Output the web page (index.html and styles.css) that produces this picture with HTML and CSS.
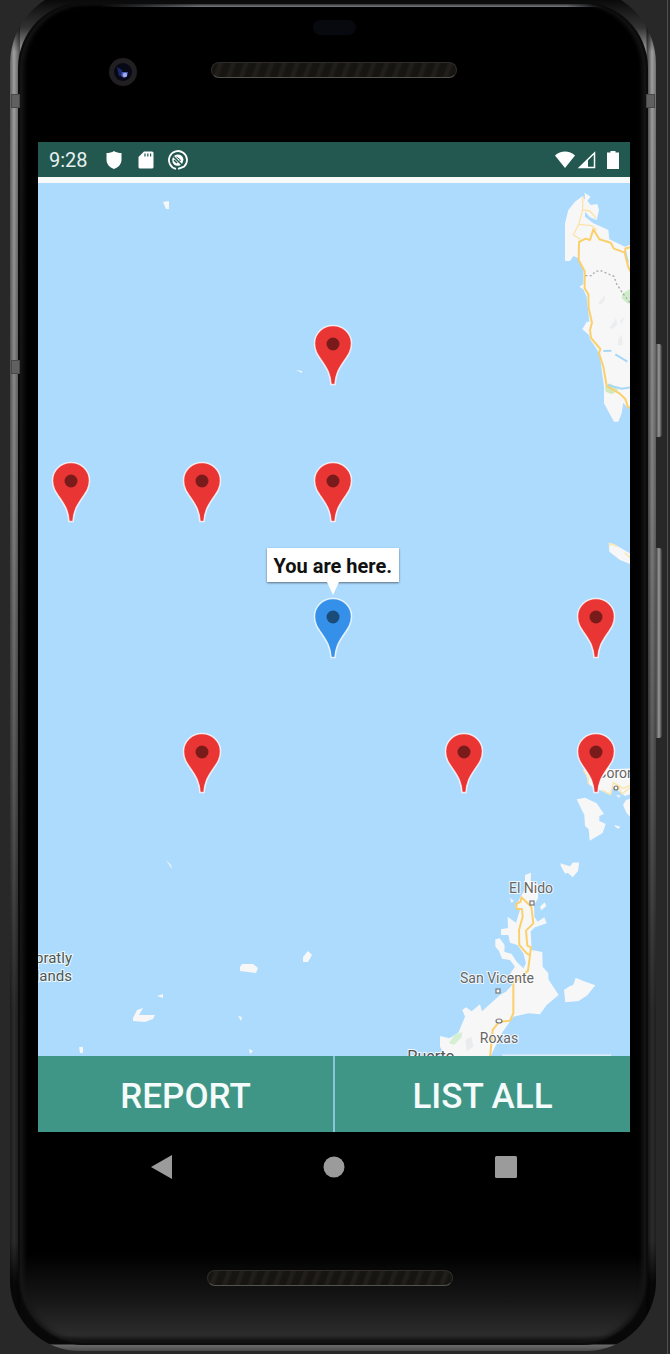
FILE: index.html
```html
<!DOCTYPE html>
<html lang="en">
<head>
<meta charset="utf-8">
<meta name="viewport" content="width=device-width, initial-scale=1">
<title>Report map</title>
<link rel="stylesheet" href="styles.css">
</head>
<body>
<svg class="defs" aria-hidden="true">
  <symbol id="pin" viewBox="0 0 40 62">
    <path d="M20 1.500C9.800 1.500 1.500 9.700 1.500 19.500C1.500 27 5 31.500 9.500 38C14.500 45.500 17.200 50 18 60.500H22C22.800 50 25.500 45.500 30.500 38C35 31.500 38.500 27 38.500 19.500C38.500 9.700 30.200 1.500 20 1.500Z" fill="currentColor" stroke="#fff" stroke-opacity=".8" stroke-width="1.500"/>
    <circle class="pin-dot" cx="20" cy="20" r="6.500"/>
  </symbol>
</svg>
<div class="phone">
  <span class="side-key power"></span>
  <span class="side-key volume"></span>
  <span class="band band-left"></span>
  <span class="band band-right"></span>
  <span class="band band-low"></span>
  <div class="face">
    <div class="bezel-top">
      <span class="sensor"></span>
      <div class="bezel-row">
        <svg class="camera" viewBox="0 0 28 28" aria-hidden="true">
          <circle cx="14" cy="14" r="14" fill="#211f21"/>
          <circle cx="14" cy="14" r="9" fill="#070916"/>
          <path d="M8 9L13 12L14 17L10 18Z" fill="#1c2968"/>
          <path d="M13 14L19 14L18 18L15 20L12 18Z" fill="#4a57b5"/>
          <circle cx="16" cy="17" r="2.200" fill="#a3abea"/>
        </svg>
        <span class="speaker"></span>
      </div>
    </div>
    <main class="screen">
      <header class="status">
        <span class="clock">9:28</span>
        <svg class="icon" viewBox="0 0 20 20" aria-hidden="true"><path d="M10 1C12 2.500 15 3 17.500 3V9.500C17.500 14 14.500 17.500 10 19C5.500 17.500 2.500 14 2.500 9.500V3C5 3 8 2.500 10 1Z" fill="#fff"/></svg>
        <svg class="icon" viewBox="0 0 20 20" aria-hidden="true"><path d="M8 1.500H16Q17.500 1.500 17.500 3V17Q17.500 18.500 16 18.500H4Q2.500 18.500 2.500 17V7Z" fill="#fff"/><path d="M9 3.500V6.500M11.800 3.500V6.500M14.600 3.500V6.500" stroke="#22584f" stroke-width="1.200"/></svg>
        <svg class="icon" viewBox="0 0 20 20" aria-hidden="true"><path d="M8 18.800A9 9 0 1 1 16 16.700L10 18.800" fill="none" stroke="#fff" stroke-width="1.800"/><path d="M13.500 14.500A5.700 5.700 0 1 1 15.500 9.500L14.500 13Z" fill="#fff"/><path d="M5.500 6.500L14 15M6 10L9 13" stroke="#22584f" stroke-width="1.500"/><path d="M8.500 7L12.500 10L11 11.500" fill="none" stroke="#22584f"/></svg>
        <span class="status-right">
          <svg class="icon" viewBox="0 0 20 20" aria-hidden="true"><path d="M0 5.500C5.500 0 14.500 0 20 5.500L10 18Z" fill="#fff"/></svg>
          <svg class="icon" viewBox="0 0 20 20" aria-hidden="true"><path d="M2.500 17.500L17.500 3V17.500Z" fill="none" stroke="#fff" stroke-width="1.500"/><path d="M2 18L11 9V18Z" fill="#fff"/></svg>
          <svg class="icon battery" viewBox="0 0 12 20" aria-hidden="true"><path d="M3.500 1H8.500V2.500H12V19H0V2.500H3.500Z" fill="#fff"/></svg>
        </span>
      </header>
      <section class="map" aria-label="Map">
        <svg class="land" viewBox="38 183 592 873" preserveAspectRatio="xMidYMid slice">
          <g transform="translate(540 180) scale(.33333)">
            <path class="ground" d="M75 243V130L85 90L105 65L128 48L135 60L134 38L152 50L142 62L152 75L172 72L177 90L170 120L150 112L135 95V110L160 130L205 150L208 178L255 200L275 192V685L262 683L250 668L245 700L235 725H222L200 685L192 670V620L180 530L172 510L150 478L147 465L127 448L140 425H148L140 350L130 328L118 320L130 312V270L115 235L100 228L90 243Z"/>
            <path d="M247 340L275 325V372L262 370L245 355Z" fill="#cdebc9"/>
            <path d="M195 620L210 610L236 630L215 643L197 635Z" fill="#d2e9bd"/>
            <path d="M174 370L195 345V360L183 374ZM208 445L228 415L232 435L215 447ZM234 480L245 462L248 494L234 497ZM238 425L256 408L246 430Z" fill="#ebedef"/>
            <path class="river" d="M190 513L214 512M226 523L262 545M203 615L245 626L275 622M256 215L264 248"/>
            <path class="road thin" d="M128 50V90L116 133L100 165L122 178M128 90L150 93L168 115M116 133L155 137L170 150"/>
            <path class="road" d="M275 201L257 205L254 218L222 206L212 188L178 178L160 148L150 180L137 176L117 186L116 240L134 274V325L145 343L146 385L156 428L150 450L153 474L181 507L177 520L190 560L200 618L238 640L256 657L264 682L275 684M254 218L265 262L275 280"/>
            <path d="M136 287H155L165 275L180 271L222 289L230 312L247 338L270 368" fill="none" stroke="#aaa" stroke-width="4" stroke-dasharray="6 7"/>
          </g>
          <g transform="translate(530 530) scale(.33333)">
            <path class="ground" d="M236 38L252 42L303 72V103L270 90L238 65Z"/>
            <path class="road thin" d="M238 50L240 40L262 50M284 68L302 84V100"/>
            <path class="ground" d="M160 720L170 740L178 765L240 795L250 770L285 798L303 792V715L240 718L220 700Z"/>
            <path class="road thin" d="M160 720L175 742L174 762M215 780L242 793L250 758L280 775L303 764M265 770L276 792L303 770"/>
            <path class="ground" d="M140 808L165 803L200 820L222 852L208 858V873L227 882L218 909L179 932L176 898L165 888L163 855ZM303 805L288 810L279 825L290 850L303 862ZM253 885L271 890L266 896L257 892ZM258 794L272 797L267 803ZM91 1005L103 1009L118 1012L128 998H147L142 1025L128 1040L116 1026L106 1032Z"/>
          </g>
          <g transform="translate(400 850) scale(.33333)">
            <path class="ground" d="M375 75L393 68L392 95L415 105L414 145L402 165L403 200L413 215L433 202L440 220L405 232L392 244L395 300L427 306L428 350L445 370V388L476 435L440 465L420 493L385 490L340 500L305 550L270 622L140 624L120 590V558L148 565L175 548L195 500L187 480L198 472L215 484L240 463L246 484L300 435L318 425L337 404L331 370L345 350L330 330L306 326L297 303L286 290V268L299 265L314 285L313 305L335 312L350 335L370 355L378 340L370 310L352 285L330 278L325 255H303V238L324 234L323 200L348 218L360 180L346 170L362 140L375 118Z"/>
            <path class="ground" d="M480 40L500 46L515 50L518 38H537L534 62L518 82L503 68L493 65ZM420 170L434 157L439 168L424 181ZM330 143L342 153L334 158ZM492 420L506 410L520 404L527 383L552 394L586 406L562 436L536 453L496 457Z"/>
            <path d="M147 580L162 556L187 546L184 563L163 584Z" fill="#d5efd2"/>
            <path d="M196 570L214 560L220 590L200 604Z" fill="#e9ebed"/>
            <path class="road" d="M270 622L278 540L298 515L330 512L340 490V400L384 362L393 292L382 287L378 242L400 220L394 170L364 142L362 155L349 162L350 177H366L368 200L357 240L358 285L380 310L390 316"/>
            <rect x="307" y="613" width="326" height="10" fill="#dceefa"/>
          </g>
          <path class="ground" d="M163 202L169 201V209L166 209ZM296 370L302 371V373ZM166 860L171 865L172 869ZM303 957L308 951L312 955L308 962L303 962ZM240 967L242 964L253 964L258 968L256 973L240 971ZM157 996L163 994V998ZM133 1018L137 1010L143 1008L139 1015L155 1015L153 1019L145 1022L133 1021ZM238 1016L242 1017L241 1021ZM79 1047L83 1047L83 1053L80 1053ZM249 1049L253 1051L250 1054Z"/>
          <g fill="#f7f7f7" stroke="#777" stroke-width="1.200">
            <rect x="530" y="901" width="4" height="4"/><rect x="496" y="989" width="4" height="4"/><ellipse cx="499" cy="1021" rx="3" ry="2"/><circle cx="616" cy="788" r="2"/>
          </g>
          <g class="labels">
            <text x="531" y="893" text-anchor="middle">El Nido</text>
            <text x="497" y="983" text-anchor="middle">San Vicente</text>
            <text x="499" y="1043" text-anchor="middle">Roxas</text>
            <text class="town" x="431" y="1062" text-anchor="middle">Puerto</text>
            <text x="616" y="778" text-anchor="middle">Coron</text>
            <text class="dark" x="72" y="963" text-anchor="end">Spratly</text>
            <text class="dark" x="72" y="981" text-anchor="end">Islands</text>
          </g>
        </svg>
        <button class="pin p1" aria-label="Report 1"><svg><use href="#pin"/></svg></button>
        <button class="pin p2" aria-label="Report 2"><svg><use href="#pin"/></svg></button>
        <button class="pin p3" aria-label="Report 3"><svg><use href="#pin"/></svg></button>
        <button class="pin p4" aria-label="Report 4"><svg><use href="#pin"/></svg></button>
        <button class="pin p5" aria-label="Report 5"><svg><use href="#pin"/></svg></button>
        <button class="pin p6" aria-label="Report 6"><svg><use href="#pin"/></svg></button>
        <button class="pin p7" aria-label="Report 7"><svg><use href="#pin"/></svg></button>
        <button class="pin p8" aria-label="Report 8"><svg><use href="#pin"/></svg></button>
        <button class="pin here" aria-label="Your position"><svg><use href="#pin"/></svg></button>
        <div class="tip">You are here.</div>
      </section>
      <div class="actions">
        <button class="action">REPORT</button>
        <button class="action">LIST ALL</button>
      </div>
    </main>
    <nav class="nav" aria-label="System">
      <button aria-label="Back"><svg viewBox="0 0 26 26"><path d="M2 13L23 1V25Z"/></svg></button>
      <button aria-label="Home"><svg viewBox="0 0 26 26"><circle cx="13" cy="13" r="10.500"/></svg></button>
      <button aria-label="Recent apps"><svg viewBox="0 0 26 26"><rect x="2" y="2" width="22" height="22" rx="1.500"/></svg></button>
    </nav>
    <div class="bezel-bottom"><span class="speaker"></span></div>
  </div>
</div>
</body>
</html>
```
FILE: styles.css
```css
* { box-sizing: border-box; }

body {
  margin: 0;
  min-height: 100vh;
  display: flex;
  flex-direction: column;
  overflow: hidden;
  background: linear-gradient(#505050, #505050) right 2px top / 1px 100% no-repeat, #282828;
  font-family: Roboto, "Liberation Sans", sans-serif;
}

button {
  padding: 0;
  border: 0;
  background: none;
  font: inherit;
}

.defs { position: absolute; width: 0; height: 0; }

/* Metal frame */
.phone {
  position: relative;
  flex: 1;
  display: flex;
  flex-direction: column;
  margin: -12px 14px 3px 10px;
  padding: 16px 10px 8px;
  border-radius: 76px 76px 70px 70px;
  background:
    linear-gradient(90deg, rgba(0, 0, 0, .4), transparent 4px, rgba(0, 0, 0, .5) 10px, transparent 10px, transparent calc(100% - 10px), rgba(0, 0, 0, .6) calc(100% - 9px), transparent calc(100% - 4px), rgba(0, 0, 0, .3)),
    linear-gradient(#0a0a0a 12px, #333 40px, #a0a0a0 64px, #999 12%, #808080 38%, #555 60%, #2c2c2c 75%, #2c2c2c 92%, #080808 95%, #080808 calc(100% - 7px), #6a6a6a calc(100% - 6px), #4a4a4a);
}

.face {
  flex: 1;
  display: flex;
  flex-direction: column;
  padding: 2px 16px 0 18px;
  border-radius: 64px;
  background:
    linear-gradient(90deg, transparent 80px, #8b9297 180px, #8b9297 calc(100% - 80px), transparent calc(100% - 40px)) top / 100% 3px no-repeat,
    linear-gradient(transparent calc(100% - 90px), #181818 calc(100% - 40px), #2c2c2c calc(100% - 8px), #0c0c0c) #000;
  box-shadow: inset 4px 0 4px #161616, inset -4px 0 4px #161616, 0 0 0 2px #0c0c0c;
}

.side-key {
  position: absolute;
  left: 100%;
  width: 6px;
  border-radius: 0 3px 3px 0;
  background: linear-gradient(90deg, #444, #999 50%, #333);
}
.power { top: 356px; height: 93px; }
.volume { top: 560px; height: 190px; }

.band {
  position: absolute;
  width: 9px;
  height: 14px;
  background: #606060;
  border: 1px solid #484848;
}
.band-left { left: 1px; top: 106px; }
.band-right { right: 1px; top: 106px; }
.band-low { left: 1px; top: 372px; }

.bezel-top {
  height: 136px;
  padding-top: 14px;
  display: flex;
  flex-direction: column;
  align-items: center;
  gap: 23px;
}
.sensor {
  width: 43px;
  height: 15px;
  border-radius: 8px;
  background: #08090e;
}
.bezel-row {
  align-self: stretch;
  display: grid;
  grid-template-columns: 1fr auto 1fr;
}
.camera { width: 28px; height: 28px; margin-left: 71px; }
.speaker {
  width: 246px;
  height: 16px;
  margin-top: 4px;
  border: 1px solid #2e2d2b;
  border-bottom-color: #55534d;
  border-radius: 8px;
  background: repeating-linear-gradient(110deg, #171512 0 5px, #221f1b 7px 9px, #171512 12px);
}

/* Screen */
.screen {
  flex: 1;
  display: flex;
  flex-direction: column;
  background: #f8fafa;
}
.status {
  height: 35px;
  margin-bottom: 6px;
  padding: 0 11px;
  display: flex;
  align-items: center;
  gap: 12px;
  background: #22584f;
  color: #e8f1ef;
  font-size: 20px;
}
.clock { margin-right: 4px; }
.icon { width: 20px; height: 20px; flex: none; }
.battery { width: 12px; margin-left: 8px; }
.status-right { display: flex; gap: 2px; margin-left: auto; }

.map {
  position: relative;
  flex: 1;
  min-height: 480px;
  overflow: hidden;
  background: #addbfe;
}
.land { position: absolute; width: 100%; height: 100%; }
.ground { fill: #f7f7f7; }
.road { fill: none; stroke: #fad06c; stroke-width: 6; stroke-linejoin: round; }
.thin { stroke: #fbe4aa; stroke-width: 4; }
.river { fill: none; stroke: #a8d8f8; stroke-width: 6; }
.labels {
  font-size: 14px;
  fill: #666;
  stroke: #fff;
  stroke-opacity: .8;
  stroke-width: 2px;
  paint-order: stroke;
}
.dark { fill: #4c5750; font-size: 15px; }
.town { fill: #555; font-size: 16px; }

.pin {
  position: absolute;
  width: 40px;
  height: 62px;
  margin: -61px 0 0 -20px;
  color: #ea3535;
}
.pin svg { display: block; width: 40px; height: 62px; }
.pin-dot { fill: #000; fill-opacity: .48; }
.p1 { left: 49.8%; top: 23.1%; }
.p2 { left: 5.6%; top: 38.8%; }
.p3 { left: 27.7%; top: 38.8%; }
.p4 { left: 49.8%; top: 38.8%; }
.p5 { left: 94.3%; top: 54.4%; }
.p6 { left: 27.7%; top: 69.9%; }
.p7 { left: 72%; top: 69.9%; }
.p8 { left: 94.3%; top: 69.9%; }
.here { left: 49.8%; top: 54.4%; color: #3590e9; }

.tip {
  position: absolute;
  left: 49.8%;
  top: 54.4%;
  width: 132px;
  height: 34px;
  margin: -110px 0 0 -66px;
  background: #fff;
  box-shadow: 0 1px 2px #5c6f80;
  color: #111;
  font-size: 20px;
  font-weight: 700;
  line-height: 36px;
  text-align: center;
}
.tip::after {
  content: "";
  position: absolute;
  left: 60px;
  top: 100%;
  border: solid transparent;
  border-width: 13px 6px 0;
  border-top-color: #fff;
}

.actions {
  display: grid;
  grid-template-columns: 1fr 1fr;
  gap: 2px;
  background: #8bc5d9;
}
.action {
  height: 76px;
  padding-top: 4px;
  background: #3f9686;
  color: #f4fbfa;
  font-size: 35px;
  font-weight: 500;
}

.nav {
  display: grid;
  grid-template-columns: repeat(3, 1fr);
  height: 70px;
  padding: 0 38px;
}
.nav button { display: grid; place-items: center; }
.nav svg { width: 26px; height: 26px; fill: #9b9b9b; }

.bezel-bottom {
  height: 141px;
  padding: 64px 8px 0 0;
  display: flex;
  justify-content: center;
}
```
